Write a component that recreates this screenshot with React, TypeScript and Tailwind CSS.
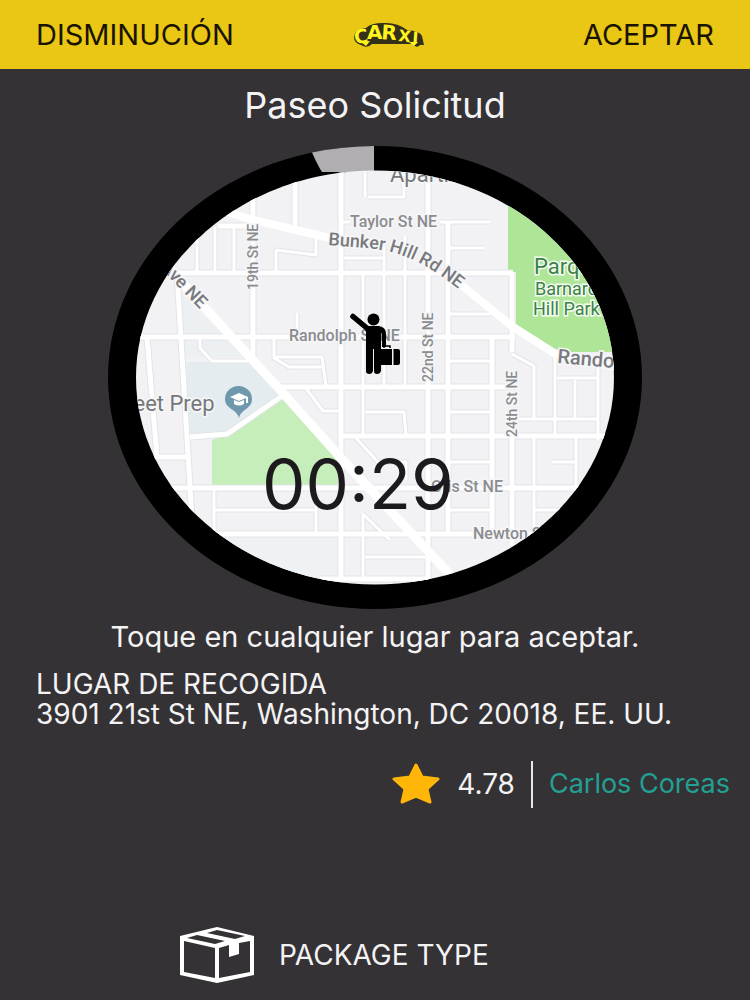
import { useId } from 'react'

// street geometry, drawn twice: a faint casing and the white road on top
const MINOR_ROADS = [
  'M343 222H350M440 222H490M450 248H485M344 258H385M368 197H404V172M365 172V197',
  'M197 227V272M215 227V272M234 227V272M276 272V250L316 255V238',
  'M200 337V348L212 361H250M274 337V358L289 367H322M274 357H322L326 386',
  'M297 313V337M305 387L323 411H341M365 412H404L406 436M356 438L378 462H406V480',
  'M363 273V436M384 246V386M405 236V386M316 488V534M214 510H316M214 488V540',
  'M450 314H490M450 361H492M450 412H492M450 462H492M448 510H492M534 510H560',
  'M534 436V534M512 354L534 366V419M512 419H598M575 380V419M576 436V488M552 462H576',
  'M557 378H598M555 352V436M598 360V440M365 557H428M363 514L390 540M363 514V578',
]

const MAJOR_ROADS = [
  'M170 273H513M136 337H515M280 387H505M341 436H606M170 488H600M205 534H570M320 579H430',
  'M341 172V582M253 190V357M295 180V232M428 180V582M448 222V534M492 337V534M512 272V352M512 436V545',
  'M147 337L157 457H189M177 273L192 520M190 437L227 434L282 396M218 226H260',
]

const LABELS = [
  { text: 'Taylor St NE', x: 350, y: 227 },
  { text: 'Randolph St NE', x: 289, y: 341 },
  { text: 'Otis St NE', x: 431, y: 492 },
  { text: 'Newton St NE', x: 473, y: 539 },
]

function StreetMap() {
  const id = useId()
  return (
    <g clipPath={`url(#${id}-clip)`}>
      <defs>
        <clipPath id={`${id}-clip`}>
          <ellipse cx="375" cy="377.5" rx="239" ry="207" />
        </clipPath>
        <path id={`${id}-bunker`} d="M328 245C360 248 380 248 398 254C428 264 448 280 486 311" />
      </defs>
      <rect x="136" y="170" width="478" height="415" fill="#f2f1f4" />
      <path d="M186 362H256L281 393L227 434L190 437Z" fill="#e5ecef" />
      <path d="M180 295L250 357H185Z" fill="#edf0f2" />
      <path d="M215 537H338V580H240Z" fill="#eef2f4" />
      <path d="M282 398L339 457V486H212V440L228 435Z" fill="#c6eeba" />
      <path d="M508 170V272H516V326L556 352H620V170Z" fill="#aee597" />

      <g fill="none" stroke="#e4e3e7" strokeLinejoin="round">
        {MINOR_ROADS.map((d) => <path key={d} d={d} strokeWidth="5" />)}
        {MAJOR_ROADS.map((d) => <path key={d} d={d} strokeWidth="7" />)}
      </g>
      <g fill="none" stroke="#ffffff" strokeLinejoin="round">
        {MINOR_ROADS.map((d) => <path key={d} d={d} strokeWidth="3" />)}
        {MAJOR_ROADS.map((d) => <path key={d} d={d} strokeWidth="5" />)}
        <path d="M160 258L207 310L282 392L340 457L455 580" strokeWidth="9" />
        <path d="M215 208L253 220L330 238M460 284L513 327L554 353L620 368" strokeWidth="8" />
      </g>

      <g className="font-['Roboto'] font-medium" fill="#8b8c8f" stroke="#f6f6f8" strokeWidth="3" paintOrder="stroke">
        {LABELS.map((label) => (
          <text key={label.text} x={label.x} y={label.y} fontSize="16">{label.text}</text>
        ))}
        <text fontSize="14" transform="translate(258 290) rotate(-90)">19th St NE</text>
        <text fontSize="14" transform="translate(433 382) rotate(-90)">22nd St NE</text>
        <text fontSize="14" transform="translate(517 437) rotate(-90)">24th St NE</text>
        <g fill="#77797c">
          <text fontSize="18" transform="translate(160 268) rotate(46)">Ave NE</text>
          <text fontSize="20" transform="translate(557 363) rotate(5)">Randolph</text>
          <text fontSize="18">
            <textPath href={`#${id}-bunker`}>Bunker Hill Rd NE</textPath>
          </text>
        </g>
      </g>
      <g className="font-['Roboto']" fill="#75787b" stroke="#f6f6f8" strokeWidth="3" paintOrder="stroke">
        <text x="390" y="182" fontSize="22">Apartments</text>
        <text x="106" y="411" fontSize="22">Street Prep</text>
      </g>
      <g className="font-['Roboto']" fill="#3b8246" stroke="#f4fbf1" strokeWidth="3" paintOrder="stroke">
        <text x="534" y="274" fontSize="22">Parque</text>
        <text x="535" y="295" fontSize="18">Barnard</text>
        <text x="533" y="315" fontSize="18">Hill Park</text>
      </g>

      {/* school pin */}
      <path d="M239 418C237 409 225 409 225 399A13.5 13 0 0 1 252 399C252 409 241 409 239 418Z" fill="#6f98ad" />
      <path d="M230 397L239 393L248 397V403H246V398L239 401Z" fill="#fff" />
      <path d="M234 400V404Q239 407 244 404V400L239 402Z" fill="#fff" />
    </g>
  )
}

function Passenger() {
  return (
    <g>
      <circle cx="373.5" cy="319.5" r="6" />
      <path d="M353 316.500L368 329" stroke="#000" strokeWidth="5.500" strokeLinecap="round" />
      <path d="M364 326H379Q386 327 386 334V347H382V333H381V371Q380 374 377 374Q374 374 374 371V349H373V371Q372 374 369.500 374Q366 374 366 371V332Z" />
      <path d="M384 348V346H390V348" fill="none" stroke="#000" strokeWidth="1.500" />
      <path d="M381 349H392V365H381ZM393.500 349H398Q400 349 400 351V363Q400 365 398 365H393.500Z" />
    </g>
  )
}

function CarxiLogo() {
  return (
    <svg viewBox="0 0 72 26" className="h-[26px] w-[72px]" role="img">
      <path d="M1 15Q1 7 13 6Q18 1 30 1Q44 0 54 8Q67 9 69 14L71 23H67Q64 27 59 22H19Q14 27 8 23Q1 21 1 15Z" fill="#35301a" />
      <g className="font-['DejaVu_Sans'] font-bold" fill="#fff51c">
        <text fontSize="19" transform="translate(2 22) rotate(-8)">C</text>
        <text x="14" y="17" fontSize="20">A</text>
        <text fontSize="20" transform="translate(28 17) rotate(4)">R</text>
        <text fontSize="16" transform="translate(45 19) rotate(6)">X</text>
        <text fontSize="16" transform="translate(59 21) rotate(4)">I</text>
      </g>
      <path d="M8 20L17 19L13 24ZM56 20L65 20L61 24Z" fill="#fff51c" />
    </svg>
  )
}

function PackageIcon() {
  return (
    <svg viewBox="0 0 76 58" className="h-[58px] w-[76px]">
      <path d="M1 10L38 1L75 10V49L38 57L1 49Z" fill="#fff" />
      <g fill="#353235">
        <path d="M8 12L18 9L46 15L36 18Z" />
        <path d="M28 7L38 4L66 10L56 13Z" />
        <path d="M5 15L36 22V52L5 46Z" />
        <path d="M40 22L50 19V31L60 28V17L71 15V46L40 52Z" />
      </g>
    </svg>
  )
}

export default function App() {
  return (
    <div className="min-h-screen bg-[#353235] font-['Inter',sans-serif] text-[#f4f3f4]">
      <header className="grid h-[69px] grid-cols-[1fr_auto_1fr] items-center bg-[#e9c714] px-9 text-[29px] text-[#191300]">
        <button className="justify-self-start">DISMINUCIÓN</button>
        <div className="ml-7"><CarxiLogo /></div>
        <button className="justify-self-end">ACEPTAR</button>
      </header>

      <main>
        <h1 className="pt-4 text-center text-[36px] leading-[40px]">Paseo Solicitud</h1>

        <button className="mx-auto mt-[21px] block w-[71.2%]">
          <svg viewBox="108 146 534 463" className="block w-full">
            <ellipse cx="375" cy="377.5" rx="267" ry="231.5" />
            <path d="M312 152.500A267 231.500 0 0 1 374 146V172H322Q318 166 312 152.500Z" fill="#b0aeb0" />
            <StreetMap />
            <Passenger />
            <text x="262" y="509" fontSize="69" fill="#1c1a1d">00:29</text>
          </svg>
        </button>

        <p className="mt-2 text-center text-[29px] leading-[40px]">Toque en cualquier lugar para aceptar.</p>

        <section className="mt-3 px-9 text-[28px] leading-[30px]">
          <h2>LUGAR DE RECOGIDA</h2>
          <p>3901 21st St NE, Washington, DC 20018, EE. UU.</p>
        </section>

        <div className="mt-8 flex items-center justify-end pr-5 text-[28px]">
          <svg viewBox="0 0 50 42" className="h-[42px] w-[50px]">
            <path d="M25 2L31 14L47 16L36 26L39 39L25 33L11 39L14 26L3 16L19 14Z" fill="#ffb608" stroke="#ffb608" strokeWidth="3" strokeLinejoin="round" />
          </svg>
          <span className="ml-4">4.78</span>
          <span className="mx-4 h-[47px] w-0.5 bg-[#e8e7e8]" />
          <a href="#perfil" className="text-[27px] text-[#22a093]">Carlos Coreas</a>
        </div>

        <button className="mt-[118px] ml-[179px] flex items-center gap-6 text-[28px]">
          <PackageIcon />
          PACKAGE TYPE
        </button>
      </main>
    </div>
  )
}
